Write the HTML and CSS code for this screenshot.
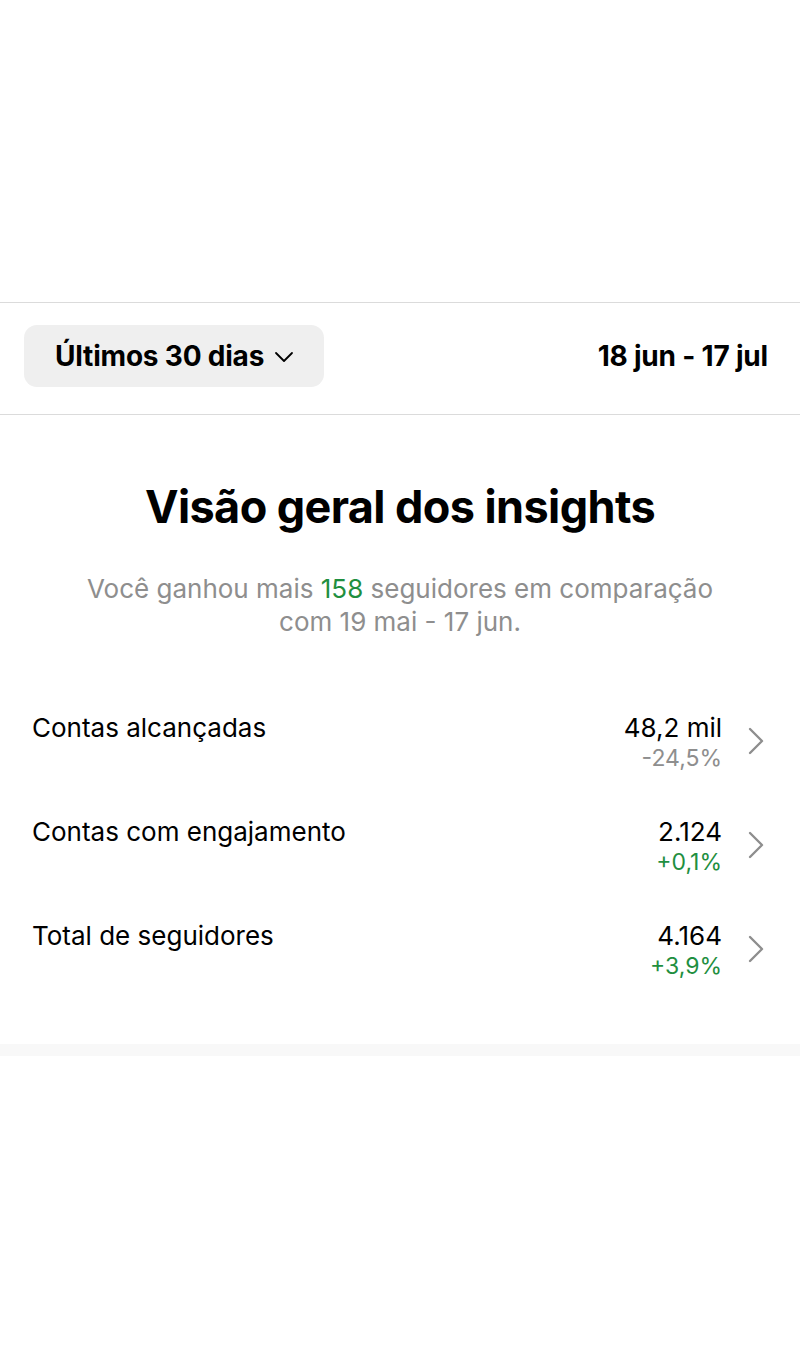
FILE: index.html
```html
<!DOCTYPE html>
<html lang="pt-BR">
<head>
    <meta charset="UTF-8">
    <meta name="viewport" content="width=device-width, initial-scale=1.0">
    <title>Insights</title>
    <link rel="stylesheet" href="styles.css">
</head>
<body>
    <div class="page">
        <div class="top-space"></div>

        <div class="period-bar">
            <button class="period-button">
                Últimos 30 dias
                <svg class="period-caret" viewBox="0 0 20 12" width="20" height="12">
                    <polyline points="2,2 10,10 18,2" fill="none" stroke="#000" stroke-width="1.8" stroke-linecap="round" stroke-linejoin="round"/>
                </svg>
            </button>
            <div class="period-range">18 jun - 17 jul</div>
        </div>

        <div class="overview">
            <h1 class="overview-title">Visão geral dos insights</h1>
            <p class="overview-text">Você ganhou mais <span class="positive">158</span> seguidores em comparação com 19 mai - 17 jun.</p>

            <div class="metrics">
                <div class="metric-row">
                    <div class="metric-label">Contas alcançadas</div>
                    <div class="metric-values">
                        <div class="metric-value">48,2 mil</div>
                        <div class="metric-change neutral">-24,5%</div>
                    </div>
                    <svg class="metric-arrow" viewBox="0 0 16 28" width="16" height="28">
                        <polyline points="2,2 14,14 2,26" fill="none" stroke="#8e8e8e" stroke-width="2.4" stroke-linecap="round" stroke-linejoin="round"/>
                    </svg>
                </div>
                <div class="metric-row">
                    <div class="metric-label">Contas com engajamento</div>
                    <div class="metric-values">
                        <div class="metric-value">2.124</div>
                        <div class="metric-change positive">+0,1%</div>
                    </div>
                    <svg class="metric-arrow" viewBox="0 0 16 28" width="16" height="28">
                        <polyline points="2,2 14,14 2,26" fill="none" stroke="#8e8e8e" stroke-width="2.4" stroke-linecap="round" stroke-linejoin="round"/>
                    </svg>
                </div>
                <div class="metric-row">
                    <div class="metric-label">Total de seguidores</div>
                    <div class="metric-values">
                        <div class="metric-value">4.164</div>
                        <div class="metric-change positive">+3,9%</div>
                    </div>
                    <svg class="metric-arrow" viewBox="0 0 16 28" width="16" height="28">
                        <polyline points="2,2 14,14 2,26" fill="none" stroke="#8e8e8e" stroke-width="2.4" stroke-linecap="round" stroke-linejoin="round"/>
                    </svg>
                </div>
            </div>
        </div>

        <div class="section-gap"></div>
    </div>
</body>
</html>
```

FILE: styles.css
```css
body {
    margin: 0;
    background: #fff;
    font-family: "Inter", "Roboto", sans-serif;
    color: #000;
    -webkit-font-smoothing: antialiased;
}
.page {
    width: 800px;
}
.top-space {
    height: 302px;
}
.period-bar {
    display: flex;
    align-items: center;
    justify-content: space-between;
    height: 105px;
    padding: 0 32px 6px 24px;
    border-top: 1px solid #dbdbdb;
    border-bottom: 1px solid #dbdbdb;
}
.period-button {
    display: flex;
    align-items: center;
    gap: 10px;
    width: 300px;
    height: 62px;
    padding: 0 0 0 31px;
    border: none;
    border-radius: 13px;
    background: #efefef;
    font-family: inherit;
    font-size: 28px;
    font-weight: 700;
    letter-spacing: -0.2px;
    color: #000;
}
.period-caret {
    margin-top: 2px;
}
.period-range {
    font-size: 28px;
    font-weight: 700;
    letter-spacing: -0.2px;
}
.overview {
    padding: 64px 0 20px;
}
.overview-title {
    margin: 0;
    text-align: center;
    font-size: 45px;
    font-weight: 700;
    letter-spacing: -0.6px;
    line-height: 56px;
}
.overview-text {
    margin: 37px auto 0;
    width: 660px;
    text-align: center;
    font-size: 26px;
    line-height: 33px;
    color: #8e8e8e;
}
.positive {
    color: #1f8f3f;
}
.neutral {
    color: #8e8e8e;
}
.metrics {
    margin-top: 74px;
    padding: 0 36px 0 32px;
}
.metric-row {
    display: flex;
    align-items: flex-start;
    height: 104px;
}
.metric-label {
    flex: 1;
    font-size: 26px;
    line-height: 32px;
}
.metric-values {
    text-align: right;
}
.metric-value {
    font-size: 26px;
    line-height: 32px;
}
.metric-change {
    font-size: 23px;
    line-height: 28px;
}
.metric-arrow {
    margin: 15px 0 0 26px;
}
.section-gap {
    height: 12px;
    background: #f8f8f8;
}
```
